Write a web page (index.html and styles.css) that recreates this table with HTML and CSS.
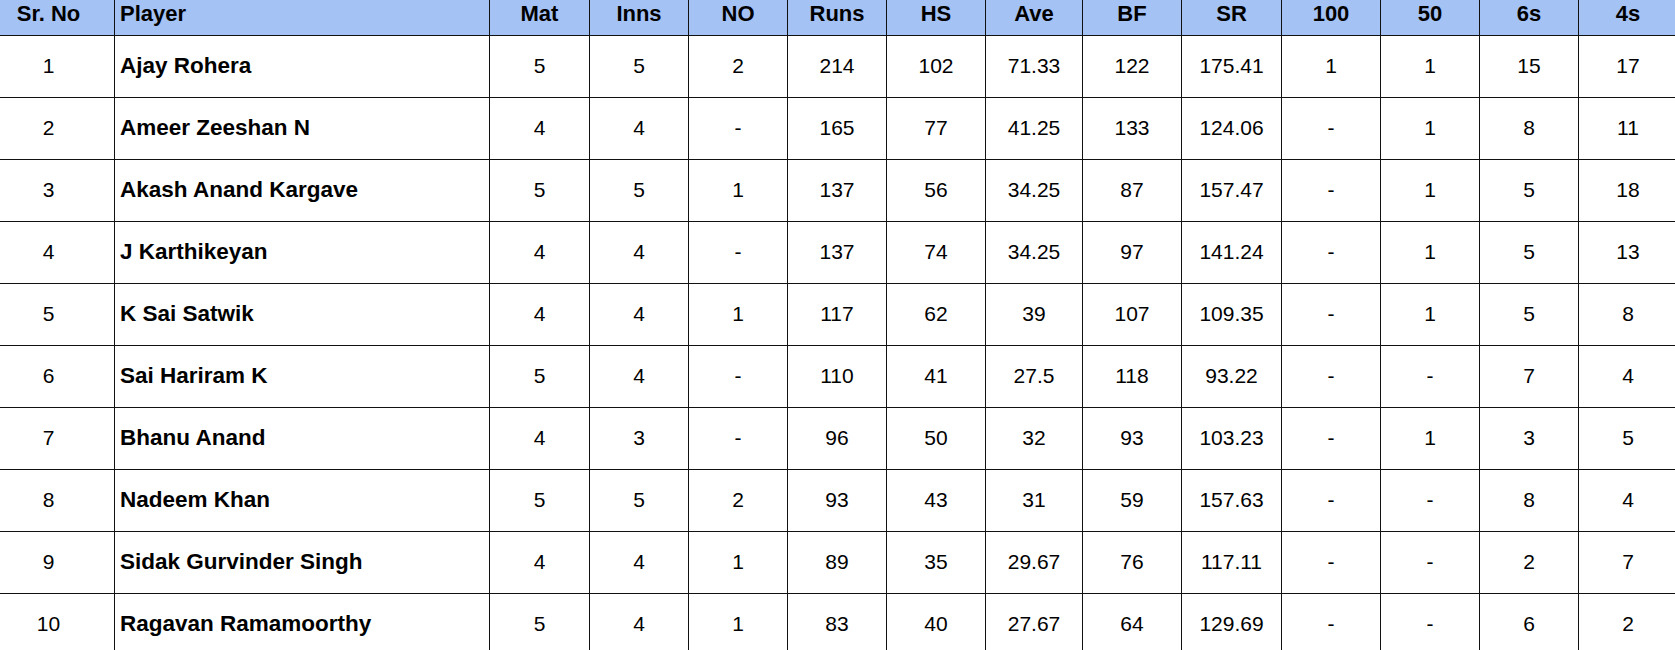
FILE: index.html
```html
<!DOCTYPE html>
<html lang="en">
<head>
<meta charset="utf-8">
<title>Batting Stats</title>
<link rel="stylesheet" href="styles.css">
</head>
<body>
<div class="viewport">
<table class="stats">
<colgroup>
<col class="c-sr"><col class="c-player"><col class="c-mat"><col class="c-n"><col class="c-n"><col class="c-n"><col class="c-n"><col class="c-ave"><col class="c-n"><col class="c-sr2"><col class="c-n"><col class="c-n"><col class="c-n"><col class="c-n">
</colgroup>
<thead>
<tr><th>Sr. No</th><th class="left">Player</th><th>Mat</th><th>Inns</th><th>NO</th><th>Runs</th><th>HS</th><th>Ave</th><th>BF</th><th>SR</th><th>100</th><th>50</th><th>6s</th><th>4s</th></tr>
</thead>
<tbody>
<tr><td>1</td><td class="name">Ajay Rohera</td><td>5</td><td>5</td><td>2</td><td>214</td><td>102</td><td>71.33</td><td>122</td><td>175.41</td><td>1</td><td>1</td><td>15</td><td>17</td></tr>
<tr><td>2</td><td class="name">Ameer Zeeshan N</td><td>4</td><td>4</td><td>-</td><td>165</td><td>77</td><td>41.25</td><td>133</td><td>124.06</td><td>-</td><td>1</td><td>8</td><td>11</td></tr>
<tr><td>3</td><td class="name">Akash Anand Kargave</td><td>5</td><td>5</td><td>1</td><td>137</td><td>56</td><td>34.25</td><td>87</td><td>157.47</td><td>-</td><td>1</td><td>5</td><td>18</td></tr>
<tr><td>4</td><td class="name">J Karthikeyan</td><td>4</td><td>4</td><td>-</td><td>137</td><td>74</td><td>34.25</td><td>97</td><td>141.24</td><td>-</td><td>1</td><td>5</td><td>13</td></tr>
<tr><td>5</td><td class="name">K Sai Satwik</td><td>4</td><td>4</td><td>1</td><td>117</td><td>62</td><td>39</td><td>107</td><td>109.35</td><td>-</td><td>1</td><td>5</td><td>8</td></tr>
<tr><td>6</td><td class="name">Sai Hariram K</td><td>5</td><td>4</td><td>-</td><td>110</td><td>41</td><td>27.5</td><td>118</td><td>93.22</td><td>-</td><td>-</td><td>7</td><td>4</td></tr>
<tr><td>7</td><td class="name">Bhanu Anand</td><td>4</td><td>3</td><td>-</td><td>96</td><td>50</td><td>32</td><td>93</td><td>103.23</td><td>-</td><td>1</td><td>3</td><td>5</td></tr>
<tr><td>8</td><td class="name">Nadeem Khan</td><td>5</td><td>5</td><td>2</td><td>93</td><td>43</td><td>31</td><td>59</td><td>157.63</td><td>-</td><td>-</td><td>8</td><td>4</td></tr>
<tr><td>9</td><td class="name">Sidak Gurvinder Singh</td><td>4</td><td>4</td><td>1</td><td>89</td><td>35</td><td>29.67</td><td>76</td><td>117.11</td><td>-</td><td>-</td><td>2</td><td>7</td></tr>
<tr><td>10</td><td class="name">Ragavan Ramamoorthy</td><td>5</td><td>4</td><td>1</td><td>83</td><td>40</td><td>27.67</td><td>64</td><td>129.69</td><td>-</td><td>-</td><td>6</td><td>2</td></tr>
</tbody>
</table>
</div>
</body>
</html>
```
FILE: styles.css
```css
html, body {
  margin: 0;
  padding: 0;
  background: #ffffff;
}
.viewport {
  width: 1675px;
  height: 650px;
  overflow: hidden;
}
.stats {
  border-collapse: collapse;
  table-layout: fixed;
  width: 1696px;
  margin-left: -18px;
  font-family: "Liberation Sans", Arial, sans-serif;
  font-size: 21px;
  color: #000;
}
.c-sr { width: 132px; }
.c-player { width: 375px; }
.c-mat { width: 100px; }
.c-n { width: 99px; }
.c-ave { width: 97px; }
.c-sr2 { width: 100px; }
.stats th {
  background: #a4c2f4;
  font-weight: bold;
  font-size: 22px;
  height: 35px;
  box-sizing: border-box;
  padding: 0 4px 9px;
  line-height: 24px;
  vertical-align: bottom;
  text-align: center;
  border: 1px solid #111;
  border-top: none;
  white-space: nowrap;
}
.stats th.left { text-align: left; padding-left: 5px; }
.stats td {
  height: 61px;
  padding: 0 4px;
  text-align: center;
  vertical-align: middle;
  border: 1px solid #111;
  line-height: 24px;
  white-space: nowrap;
}
.stats td.name {
  text-align: left;
  font-weight: bold;
  font-size: 22.5px;
  padding-left: 5px;
}
```
